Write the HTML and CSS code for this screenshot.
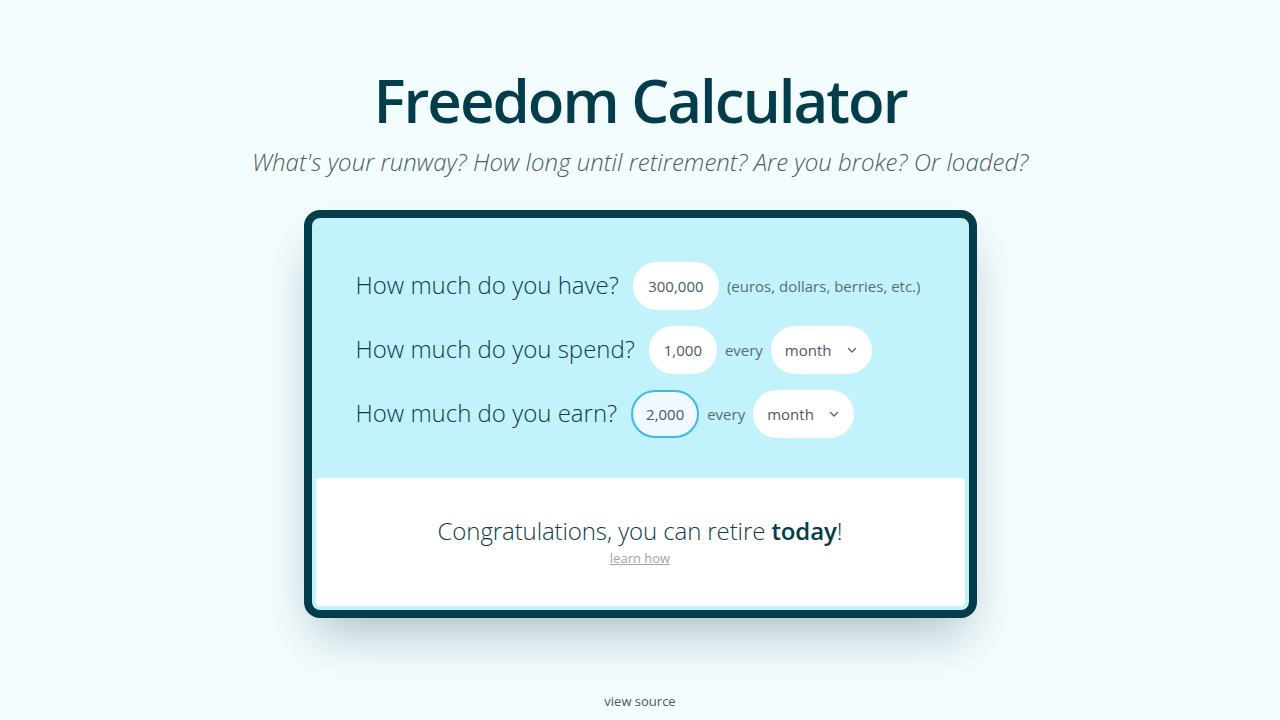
FILE: index.html
```html
<!DOCTYPE html>
<html lang="en">
<head>
<meta charset="utf-8">
<title>Freedom Calculator</title>
<link rel="stylesheet" href="styles.css">
</head>
<body>
<main class="page">
  <header class="hero">
    <h1 class="title">Freedom Calculator</h1>
    <p class="subtitle">What's your runway? How long until retirement? Are you broke? Or loaded?</p>
  </header>
  <section class="card">
    <div class="form">
      <div class="row">
        <span class="label">How much do you have?</span>
        <span class="field w-have">300,000</span>
        <span class="note">(euros, dollars, berries, etc.)</span>
      </div>
      <div class="row">
        <span class="label">How much do you spend?</span>
        <span class="field w-small">1,000</span>
        <span class="note">every</span>
        <span class="select">month
          <svg class="chev" width="12" height="12" viewBox="0 0 12 12"><path d="M2.5 4.5 L6 8 L9.5 4.5" fill="none" stroke="#5b6b70" stroke-width="1.4" stroke-linecap="round" stroke-linejoin="round"/></svg>
        </span>
      </div>
      <div class="row">
        <span class="label">How much do you earn?</span>
        <span class="field w-small focused">2,000</span>
        <span class="note">every</span>
        <span class="select">month
          <svg class="chev" width="12" height="12" viewBox="0 0 12 12"><path d="M2.5 4.5 L6 8 L9.5 4.5" fill="none" stroke="#5b6b70" stroke-width="1.4" stroke-linecap="round" stroke-linejoin="round"/></svg>
        </span>
      </div>
    </div>
    <div class="result">
      <p class="result-text">Congratulations, you can retire <strong>today</strong>!</p>
      <a class="learn" href="#">learn how</a>
    </div>
  </section>
  <footer class="foot"><a class="source" href="#">view source</a></footer>
</main>
</body>
</html>
```

FILE: styles.css
```css
* { box-sizing: border-box; }
html, body { margin: 0; padding: 0; }
body {
  background: #f3fcff;
  font-family: "Open Sans", "Noto Sans", sans-serif;
  color: #0b3b48;
}
.page {
  display: flex;
  flex-direction: column;
  align-items: center;
  min-height: 720px;
}
.hero { text-align: center; padding-top: 62px; }
.title {
  margin: 0;
  font-size: 60px;
  line-height: 76px;
  font-weight: 600;
  color: #033d4c;
  letter-spacing: -2px;
}
.subtitle {
  margin: 8px 0 0;
  font-size: 24px;
  line-height: 32px;
  font-style: italic;
  font-weight: 300;
  color: #4a5d63;
  letter-spacing: 0.03px;
}
.card {
  margin-top: 32px;
  width: 673px;
  border: 8px solid #033d4c;
  border-radius: 16px;
  background: #c2f2fc;
  box-shadow: 0 25px 50px -12px rgba(0, 40, 50, 0.3);
  padding: 0 4px 4px;
}
.form {
  display: flex;
  flex-direction: column;
  gap: 16px;
  padding: 44px 40px 40px;
}
.row {
  display: flex;
  align-items: center;
  gap: 8px;
  height: 48px;
}
.label {
  font-size: 24px;
  line-height: 30px;
  font-weight: 300;
  color: #0d3c49;
  margin-right: 6px;
  margin-top: -2px;
  letter-spacing: 0;
}
.field, .select {
  height: 48px;
  border-radius: 24px;
  background: #fff;
  display: flex;
  align-items: center;
  justify-content: center;
  font-size: 15px;
  color: #4b5a60;
  font-weight: 400;
}
.w-have { width: 86px; }
.w-small { width: 68px; }
.focused {
  border: 2px solid #3bb8ee;
  background: #f0f9ff;
}
.note {
  font-size: 15px;
  color: #5b6b70;
  font-weight: 400;
}
.select {
  width: 101px;
  justify-content: space-between;
  padding: 0 14px 0 14px;
}
.chev { display: block; }
.result {
  background: #fff;
  border-radius: 4px;
  height: 128px;
  display: flex;
  flex-direction: column;
  align-items: center;
  padding-top: 36px;
}
.result-text {
  margin: 0;
  font-size: 24px;
  line-height: 34px;
  font-weight: 300;
  color: #0d3c49;
  letter-spacing: -0.1px;
}
.result-text strong { font-weight: 600; color: #033d4c; }
.learn {
  margin-top: 1px;
  font-size: 13px;
  line-height: 18px;
  color: #9aa7ab;
  text-decoration: underline;
}
.foot {
  margin-top: auto;
  padding-bottom: 9px;
}
.source {
  font-size: 13px;
  color: #4a5a60;
  text-decoration: none;
}
```
